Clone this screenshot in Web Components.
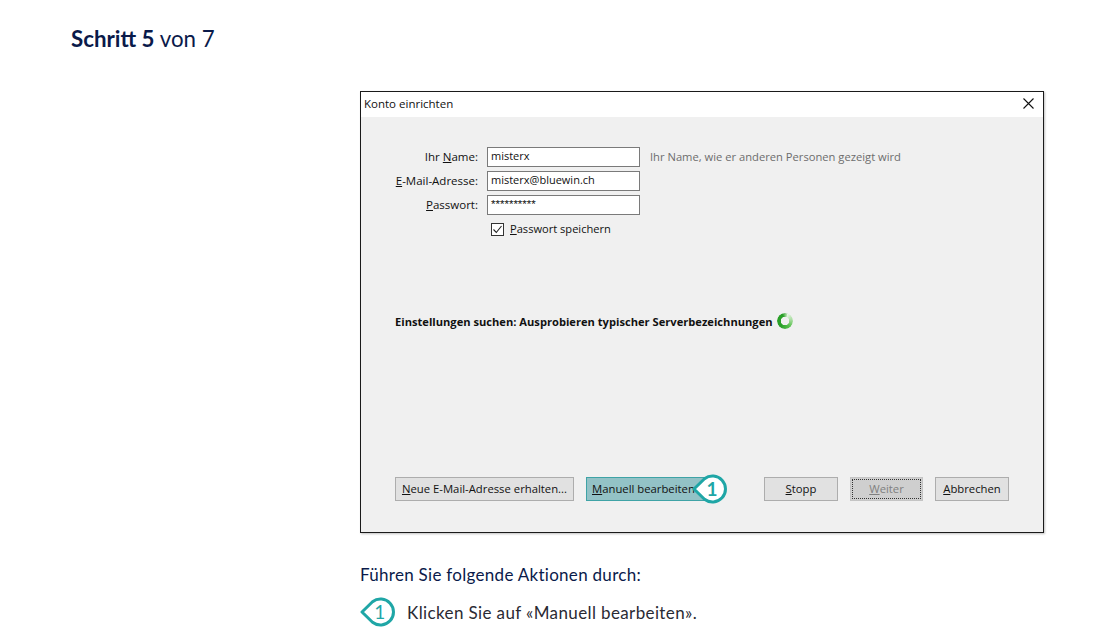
<!DOCTYPE html>
<html lang="de">
<head>
<meta charset="utf-8">
<title>Schritt 5 von 7</title>
<style>
    html, body { margin: 0; background: #fff; overflow: hidden; }
    body { height: 640px; font-family: "Lato", "Noto Sans", sans-serif; color: #0a1a4a; }
</style>
</head>
<body>
<step-page>
    <span slot="step"><b>Schritt 5</b> von 7</span>
    <account-dialog></account-dialog>
    <span slot="intro">Führen Sie folgende Aktionen durch:</span>
    <action-item slot="items" number="1">Klicken Sie auf «Manuell bearbeiten».</action-item>
</step-page>

<script>
// shared bits {{{1

const DIALOG_FONT = `"Open Sans", "Noto Sans", sans-serif`;

// The teal callout: a circle with a point to the left
const CALLOUT_SVG = `
    <svg width="36" height="30" viewBox="0 0 36 30" aria-hidden="true">
        <path d="M2 15 L12.5 4.75 A13 13 0 1 1 12.5 25.25 Z"
              fill="#fff" stroke="#1fa6a6" stroke-width="3" stroke-linejoin="round"/>
    </svg>`;

// class StepPage {{{1

class StepPage extends HTMLElement
{
    constructor() {
        super();
        this.attachShadow({ mode: 'open' }).innerHTML = `
        <style>
        :host {
            display: block;
            padding: 24px 0 0 71px;
        }
        .step {
            font-size: 22.3px;
            line-height: 30px;
            height: 67px;
        }
        .content {
            margin-left: 289px;
            width: 684px;
        }
        .intro {
            margin-top: 31px;
            font-size: 17px;
            line-height: 22px;
            letter-spacing: 0.29px;
        }
        </style>
        <div class="step"><slot name="step"></slot></div>
        <div class="content">
            <slot></slot>
            <div class="intro"><slot name="intro"></slot></div>
            <slot name="items"></slot>
        </div>`;
    }
}

// class AccountDialog {{{1

class AccountDialog extends HTMLElement
{
    constructor() {
        super();
        this.attachShadow({ mode: 'open' }).innerHTML = `
        <style>
        :host {
            box-sizing: border-box;
            width: 684px;
            height: 442px;
            border: 1px solid #1a1a1a;
            box-shadow: 1px 1px 2px rgba(0,0,0,.25);
            font-family: ${DIALOG_FONT};
            font-size: 11.5px;
            color: #111;
            background: #f0f0f0;
            display: flex;
            flex-direction: column;
        }
        .title {
            height: 25px;
            flex: none;
            background: #fff;
            display: flex;
            align-items: center;
            justify-content: space-between;
            padding: 0 8px 2px 3px;
            box-sizing: border-box;
        }
        .body {
            flex: 1;
            position: relative;
            display: flex;
            flex-direction: column;
            padding: 30px 34px 31px;
        }
        .form {
            display: grid;
            grid-template-columns: 83px 153px auto;
            grid-auto-rows: 20px;
            column-gap: 9px;
            row-gap: 4px;
            align-items: center;
        }
        .form label { text-align: right; white-space: nowrap; padding-bottom: 2px; }
        .field {
            box-sizing: border-box;
            height: 20px;
            border: 1px solid #7a7a7a;
            background: #fff;
            padding: 0 3px;
            line-height: 16px;
            font-size: 11px;
        }
        .field.secret { font-family: "Liberation Sans", sans-serif; font-size: 11.5px; }
        .hint { color: #6d6d6d; margin-left: 1px; font-size: 11.2px; padding-bottom: 2px; }
        u { text-underline-offset: 1px; }
        .remember {
            display: flex;
            align-items: center;
            gap: 6px;
            margin: 6px 0 0 96px;
            height: 16px;
            font-size: 11.1px;
        }
        .remember span { padding-bottom: 2px; }
        .status {
            margin-top: 71px;
            height: 26px;
            display: flex;
            align-items: center;
            gap: 4px;
            font-weight: 700;
            font-size: 11.15px;
        }
        .spinner {
            width: 16px;
            height: 16px;
            border-radius: 50%;
            background: conic-gradient(from 20deg, #e6f5e2 0deg, #a6dc9e 60deg, #58c04e 120deg, #2aa028 200deg, #2aa028 320deg, #bfe6b8 360deg);
            -webkit-mask: radial-gradient(circle, transparent 4px, #000 4.5px);
            mask: radial-gradient(circle, transparent 4px, #000 4.5px);
        }
        .buttons {
            margin-top: auto;
            display: flex;
            gap: 12px;
        }
        .spacer { flex: 1; }
        callout-badge {
            position: absolute;
            left: 331px;
            top: 357px;
        }
        </style>
        <div class="title">
            <span>Konto einrichten</span>
            <svg width="13" height="13" viewBox="0 0 13 13"><path d="M1.5 1.5 L11.5 11.5 M11.5 1.5 L1.5 11.5" stroke="#111" stroke-width="1.1" fill="none"/></svg>
        </div>
        <div class="body">
            <div class="form">
                <label>Ihr <u>N</u>ame:</label><div class="field">misterx</div><div class="hint">Ihr Name, wie er anderen Personen gezeigt wird</div>
                <label><u>E</u>-Mail-Adresse:</label><div class="field">misterx@bluewin.ch</div><div></div>
                <label><u>P</u>asswort:</label><div class="field secret">**********</div><div></div>
            </div>
            <div class="remember">
                <svg width="13" height="13" viewBox="0 0 13 13"><rect x=".5" y=".5" width="12" height="12" fill="#fff" stroke="#333"/><path d="M2.5 6.5 L5.3 9.5 L10.5 3" fill="none" stroke="#222" stroke-width="1.1"/></svg>
                <span><u>P</u>asswort speichern</span>
            </div>
            <div class="status">
                <span>Einstellungen suchen: Ausprobieren typischer Serverbezeichnungen</span>
                <div class="spinner"></div>
            </div>
            <div class="buttons">
                <dialog-button width="179"><u>N</u>eue E-Mail-Adresse erhalten...</dialog-button>
                <dialog-button width="120" variant="highlight"><u>M</u>anuell bearbeiten</dialog-button>
                <div class="spacer"></div>
                <dialog-button width="74"><u>S</u>topp</dialog-button>
                <dialog-button width="73" variant="disabled"><u>W</u>eiter</dialog-button>
                <dialog-button width="74"><u>A</u>bbrechen</dialog-button>
            </div>
            <callout-badge number="1" weight="700"></callout-badge>
        </div>`;
    }
}

// class DialogButton {{{1

class DialogButton extends HTMLElement
{
    connectedCallback() {
        if (this.shadowRoot)
            return;
        const w = this.getAttribute('width');
        const variant = this.getAttribute('variant') || '';
        this.attachShadow({ mode: 'open' }).innerHTML = `
        <style>
        :host {
            display: block;
            flex: none;
            box-sizing: border-box;
            width: ${w}px;
            height: 24px;
        }
        .b {
            box-sizing: border-box;
            height: 100%;
            border: 1px solid #adadad;
            background: #e1e1e1;
            display: flex;
            align-items: center;
            justify-content: center;
            white-space: nowrap;
            padding-bottom: 2px;
            font-size: 11.3px;
        }
        .b.highlight {
            background: #93c2c6;
            border: 1px solid #3fa3a6;
            justify-content: flex-start;
            padding-left: 5px;
        }
        .b.disabled {
            background: #cfcfcf;
            border: 1px solid #c4c4c4;
            color: #808080;
            position: relative;
        }
        .b.disabled::after {
            content: "";
            position: absolute;
            inset: 1px;
            border: 1px dotted #333;
        }
        </style>
        <div class="b ${variant}"><slot></slot></div>`;
    }
}

// class CalloutBadge {{{1

class CalloutBadge extends HTMLElement
{
    connectedCallback() {
        if (this.shadowRoot)
            return;
        this.attachShadow({ mode: 'open' }).innerHTML = `
        <style>
        :host {
            display: block;
            position: relative;
            width: 36px;
            height: 30px;
            flex: none;
            font-family: "Lato", "Noto Sans", sans-serif;
        }
        svg { display: block; }
        .num {
            position: absolute;
            left: 12px;
            top: 0;
            width: 16px;
            text-align: center;
            line-height: 30px;
            font-size: 19px;
            font-weight: ${this.getAttribute('weight') || 400};
            color: #1fa6a6;
        }
        </style>
        ${CALLOUT_SVG}
        <span class="num">${this.getAttribute('number')}</span>`;
    }
}

// class ActionItem {{{1

class ActionItem extends HTMLElement
{
    connectedCallback() {
        if (this.shadowRoot)
            return;
        this.attachShadow({ mode: 'open' }).innerHTML = `
        <style>
        :host {
            display: flex;
            align-items: center;
            gap: 11px;
            margin-top: 11px;
            font-size: 17px;
            letter-spacing: 0.38px;
            color: #2a2a33;
        }
        </style>
        <callout-badge number="${this.getAttribute('number')}"></callout-badge>
        <span><slot></slot></span>`;
    }
}

// }}}

customElements.define("dialog-button", DialogButton);
customElements.define("callout-badge", CalloutBadge);
customElements.define("account-dialog", AccountDialog);
customElements.define("action-item", ActionItem);
customElements.define("step-page", StepPage);
</script>
</body>
</html>
